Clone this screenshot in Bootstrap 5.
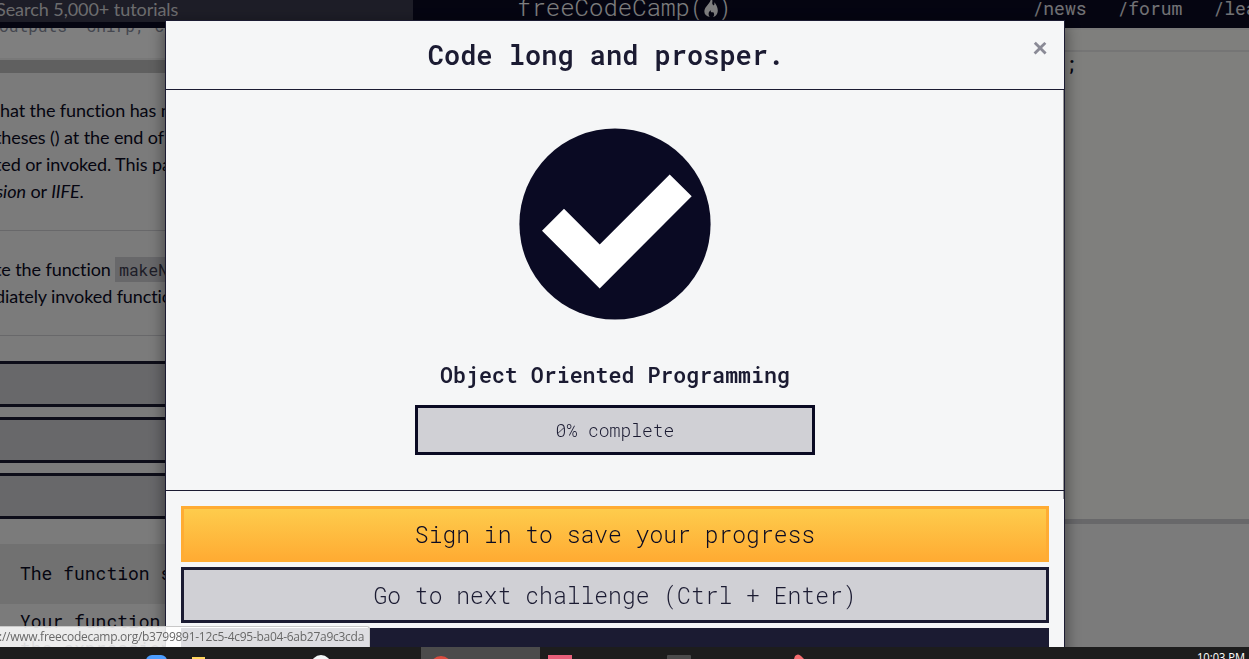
<!DOCTYPE html>
<html lang="en">
<head>
<meta charset="utf-8">
<title>Object Oriented Programming | freeCodeCamp</title>
<link href="https://cdn.jsdelivr.net/npm/bootstrap@5.3.0/dist/css/bootstrap.min.css" rel="stylesheet">
<style>
:root { --mono: "Roboto Mono", "Liberation Mono", monospace; }
body { height: 659px; overflow: hidden; font: 18px/27px Lato, sans-serif; font-variant-ligatures: none; color: #0a0a23; background: #f6f6f6; }
.screen { height: 647px; }
.mono { font-family: var(--mono); }
.topnav { height: 28px; background: #0a0a23; color: #fff; }
.search { width: 413px; height: 22px; background: #3b3b4f; color: #d8d8dc; line-height: 18px; text-indent: -4px; letter-spacing: -.05px; }
.brand { font: 300 24px/24px var(--mono); margin-left: 104px; height: 21px; margin-top: -5px; }
.brand svg { margin: -1px -1.5px 0; }
.links { font: 18px/17px var(--mono); gap: 31px; left: 1032.5px; color: #e4e4ea; }
.lesson { width: 600px; }
.snippet { height: 30px; background: #fff; color: #8a8fa0; font: 16.2px/24px var(--mono); }
.snippet div { margin-top: -14px; margin-left: -1px; }
.scroll { height: 15px; background: #c1c1c1; border-top: 2px solid #f0f0f0; }
.copy, .task { letter-spacing: -.09px; }
.copy { padding-top: 24px; height: 158px; border-bottom: 1px solid #d0d0d5; }
.copy div, .task div { text-indent: -5px; }
.copy div:first-child { text-indent: 0; }
.copy div:last-child { text-indent: -4px; }
.task { height: 105px; padding-top: 25px; border-bottom: 1px solid #d0d0d5; }
.task code { font: 16.2px/24px var(--mono); letter-spacing: 0; background: #d0d0d5; color: #3b3b4f; padding: 2px 4px; }
.tool { height: 46px; border: solid #1b1b32; border-width: 3px 0; background: #d0d0d5; border-radius: 0; }
.tools { gap: 10px; padding-top: 25px; }
.tests { margin-top: 25px; }
.tests div { padding: 16px 20px 0; height: 60px; font-family: var(--mono); }
.tests div:first-child { background: #e2e2e2; }
.tests div:last-child { padding-top: 4px; }
.editor { background: #fffffa; height: 491px; border-top: 2px solid #f4f4f4; }
.tabs { height: 22px; border-bottom: 2px solid #eaeaea; }
.semi { padding-left: 466px; margin-top: -1px; font-weight: 500; }
.split { height: 5px; background: #d0d0d5; }
.modal-dialog { width: 900px; max-width: 900px; margin: 20px 0 0 165px; }
.modal-content { border: 1px solid #1b1b32; border-radius: 0; background: #f5f6f7; color: #1b1b32; box-shadow: 0 5px 15px rgba(0,0,0,.5); height: 720px; }
.modal-header { height: 69px; border-bottom: 1px solid #1b1b32; border-radius: 0; padding: 0 18px 0 0; }
.modal-header h1 { font: 600 27px/68px var(--mono); }
.x { position: absolute; right: 16px; top: 12px; font: 900 27px/27px Lato, sans-serif; color: #8a8a96; background: none; border: 0; padding: 0; }
.modal-body { height: 401px; flex: none; padding: 38px 0 0; border-bottom: 1px solid #1b1b32; box-shadow: inset -1px 0 #999; }
.modal-body h2 { font: 600 21.6px/26px var(--mono); margin: 42px 0 17px; }
.meter { width: 400px; height: 50px; border: 3px solid #0a0a23; background: #d0d0d5; font: 350 18px/44px var(--mono); }
.modal-footer { padding: 15px; gap: 5px; border: 0; justify-content: stretch; background: linear-gradient(#999, #999) right top / 1px 8px no-repeat; }
.modal-footer .btn { height: 56px; margin: 0; border: 3px solid #1b1b32; border-radius: 0; background: #d0d0d5; color: #1b1b32; font: 350 23px/50px var(--mono); padding: 0; }
.modal-footer .btn.gold { border-color: #ffac33; background: linear-gradient(#fecc4c, #ffac33); color: #0a0a23; }
.modal-footer .btn.navy { background: #1b1b32; }
.status { z-index: 1100; left: 0; bottom: 0; width: 370px; height: 21px; background: rgba(255,255,255,.86); color: #686868; font: 12px/20px "Open Sans", sans-serif; letter-spacing: -.27px; text-indent: -1px; border: 1px solid #c8c8c8; border-width: 1px 1px 0 0; border-radius: 0 3px 0 0; }
.taskbar { height: 12px; background: #1d1d1d; position: relative; z-index: 1110; }
</style>
</head>
<body>
<div class="screen position-relative overflow-hidden">
  <nav class="topnav d-flex position-relative text-nowrap">
    <div class="search overflow-hidden">Search 5,000+ tutorials</div>
    <div class="brand d-flex">freeCodeCamp(<svg width="16" height="24" viewBox="0 0 16 24"><path fill="#fff" d="M8 3c3 5 0 6 2 8 1 1 2-1 1-3 3 3 5 8 3 12-1 2-3 3-4 3 2-2 1-4 0-5-1 1-3 0-2-2-3 2-3 5-1 7C1 22 0 17 3 13c3-4 5-5 5-10z"/></svg>)</div>
    <div class="links d-flex position-absolute"><span>/news</span><span>/forum</span><span>/learn</span></div>
  </nav>
  <div class="d-flex text-nowrap">
    <main class="lesson">
      <div class="snippet overflow-hidden"><div>outputs "Chirp, chirp</div></div>
      <div class="scroll"></div>
      <div class="copy"><div>hat the function has no name</div><div>theses () at the end of the</div><div>ted or invoked. This pattern</div><div><i>sion</i> or <i>IIFE</i>.</div></div>
      <div class="task"><div>te the function <code>makeNest</code></div><div>diately invoked function</div></div>
      <div class="tools d-grid"><div class="tool"></div><div class="tool"></div><div class="tool"></div></div>
      <div class="tests"><div>The function should</div><div>Your function should<br>the expression</div></div>
    </main>
    <aside class="flex-fill">
      <div class="editor"><div class="tabs"></div><div class="mono semi">;</div></div>
      <div class="split"></div>
    </aside>
  </div>
  <div class="modal-backdrop show"></div>
  <div class="modal d-block overflow-hidden">
    <div class="modal-dialog">
      <div class="modal-content">
        <div class="modal-header justify-content-center"><h1 class="m-0">Code long and prosper.</h1><button class="x" aria-label="Close">×</button></div>
        <div class="modal-body text-center">
          <svg class="d-block mx-auto" width="192" height="192" viewBox="0 0 192 192"><circle cx="96" cy="96" r="95.6" fill="#0a0a23"/><path fill="#fff" d="M23 102.7 45 80.7 80.7 116.5 150.7 46.5 172.7 68.3 80.7 160.4z"/></svg>
          <h2>Object Oriented Programming</h2>
          <div class="meter mx-auto">0% complete</div>
        </div>
        <div class="modal-footer d-grid"><button class="btn gold">Sign in to save your progress</button><button class="btn">Go to next challenge (Ctrl + Enter)</button><button class="btn navy"></button></div>
      </div>
    </div>
  </div>
  <div class="status position-absolute text-nowrap overflow-hidden">://www.freecodecamp.org/b3799891-12c5-4c95-ba04-6ab27a9c3cda</div>
</div>
<footer class="taskbar overflow-hidden">
  <svg class="d-block" width="1249" height="12"><path fill="#4b4b4b" d="M421 0h119v12H421z"/><rect x="146" y="8" width="21" height="12" rx="6" fill="#4c9dff"/><path fill="#ffd65c" d="M192 10h13v2h-13z"/><circle cx="321" cy="18" r="10" fill="#f4f8f8"/><circle cx="441" cy="20" r="11" fill="#dc4b3e"/><path fill="#e8607a" d="M548 8h24v4h-24z"/><rect x="667" y="8" width="24" height="8" rx="1" fill="#4b4b4b"/><path fill="#f76d70" d="m794 12 1-3q3-3 6 0l3 3z"/><text x="1197" y="15" fill="#fff" font-family="Open Sans" font-size="12" textLength="48" lengthAdjust="spacingAndGlyphs">10:03 PM</text></svg>
</footer>
<script src="https://cdn.jsdelivr.net/npm/bootstrap@5.3.0/dist/js/bootstrap.bundle.min.js"></script>
</body>
</html>
